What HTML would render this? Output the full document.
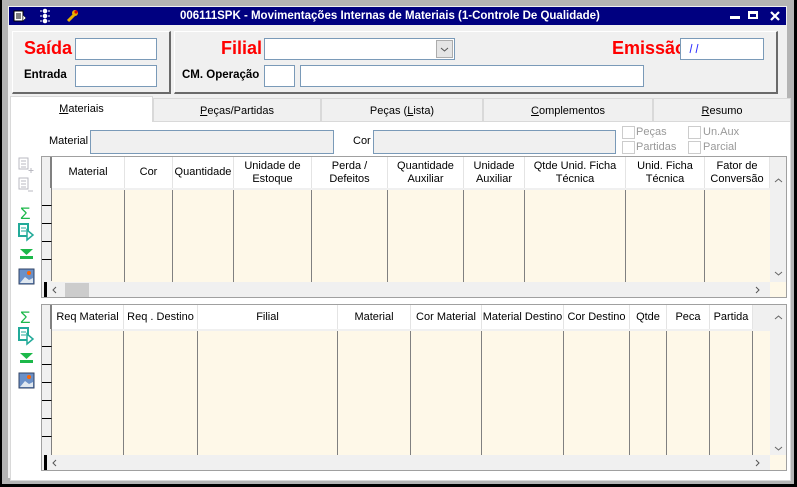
<!DOCTYPE html>
<html><head><meta charset="utf-8"><style>
*{margin:0;padding:0;box-sizing:border-box}
body{width:797px;height:487px;overflow:hidden;background:#a8a8a8;font-family:"Liberation Sans",sans-serif;font-size:11px;color:#000;position:relative}
.a{position:absolute}
.title{left:9px;top:7px;width:777px;height:18px;background:#000080;color:#fff;font-weight:bold;font-size:11.5px}
.panel{background:#f0f0f0;border-top:1px solid #fff;border-left:1px solid #fff;border-right:2px solid #6a6a6a;border-bottom:2px solid #6a6a6a}
.inp{background:#fff;border:1px solid #7a9ab8}
.red{color:#f00;font-weight:bold;font-size:18px;font-family:"Liberation Sans",sans-serif}
.lbl{font-weight:bold;font-size:11.5px}
.tab{top:98px;height:23px;background:#f0f0f0;border:1px solid #d9d9d9;border-bottom:none;text-align:center;line-height:24px;font-size:11px}
.grid{border:1px solid #a0a0a0;background:#f0f0f0;overflow:hidden}
.hd{background:#fff;text-align:center;font-size:11px;display:flex;align-items:center;justify-content:center;line-height:13px;border-right:1px solid #e4e4e4;white-space:nowrap;overflow:hidden}
.col{background:#fef8e8;border-right:1px solid #808080}
.ri{background:#f0f0f0;border-right:1px solid #808080;border-bottom:1px solid #000}
.cb{width:13px;height:13px;border:1px solid #ccc;background:#fff}
.gl{color:#999;font-size:11px}
</style></head><body>
<div class="a" style="left:0;top:0;width:797px;height:487px;background:#000"></div>
<div class="a" style="left:2px;top:0;width:792px;height:484px;background:#b4b4b4"></div>
<div class="a" style="left:8px;top:6px;width:779px;height:472px;background:#f0f0f0"></div>
<div class="a title">
 <svg class="a" style="left:4px;top:3px" width="14" height="12"><rect x="1" y="1" width="9" height="10" fill="#fff" stroke="#000"/><path d="M3 4h5M3 6h5M3 8h5" stroke="#000"/><path d="M10 5l3 3-3 3z" fill="#fff" stroke="#000" stroke-width=".5"/></svg>
 <svg class="a" style="left:30px;top:1px" width="12" height="16"><circle cx="6" cy="3" r="2.3" fill="#fff"/><circle cx="6" cy="8" r="2.3" fill="#fff"/><circle cx="6" cy="13" r="2.3" fill="#fff"/><path d="M1 3h2M9 3h2M1 8h2M9 8h2M1 13h2M9 13h2" stroke="#fff"/></svg>
 <svg class="a" style="left:57px;top:2px" width="14" height="14"><path d="M2 12l6-6" stroke="#e8b000" stroke-width="3"/><circle cx="9" cy="4" r="3" fill="#e8b000"/><circle cx="10" cy="3" r="1.6" fill="#d00"/></svg>
 <div class="a" style="left:171px;top:0;line-height:18px;white-space:nowrap">006111SPK - Movimentações Internas de Materiais (1-Controle De Qualidade)</div>
 <div class="a" style="left:721px;top:9px;width:10px;height:3px;background:#fff"></div>
 <div class="a" style="left:739px;top:4px;width:10px;height:8px;border:2px solid #fff;border-top-width:3px"></div>
 <svg class="a" style="left:761px;top:4px" width="10" height="10"><path d="M1 1l8 8M9 1l-8 8" stroke="#fff" stroke-width="2.2"/></svg>
</div>
<div class="a panel" style="left:12px;top:31px;width:159px;height:63px"></div>
<div class="a panel" style="left:174px;top:31px;width:604px;height:63px"></div>
<div class="a red" style="left:24px;top:38px">Saída</div>
<div class="a inp" style="left:75px;top:38px;width:82px;height:22px"></div>
<div class="a lbl" style="left:24px;top:69px">Entrada</div>
<div class="a inp" style="left:75px;top:65px;width:82px;height:22px"></div>
<div class="a red" style="left:221px;top:38px">Filial</div>
<div class="a inp" style="left:264px;top:38px;width:191px;height:22px"></div>
<div class="a" style="left:436px;top:40px;width:17px;height:18px;background:#e5e5e5;border:1px solid #acacac"><svg width="15" height="16"><path d="M4 7l3.5 3 3.5-3" fill="none" stroke="#555"/></svg></div>
<div class="a red" style="left:612px;top:38px">Emissão</div>
<div class="a inp" style="left:680px;top:38px;width:84px;height:22px"><svg class="a" style="left:7px;top:4px" width="20" height="12"><path d="M4 1l-2 9M10 1l-2 9" stroke="#33f"/></svg></div>
<div class="a lbl" style="left:182px;top:69px">CM. Operação</div>
<div class="a inp" style="left:264px;top:65px;width:31px;height:22px"></div>
<div class="a inp" style="left:300px;top:65px;width:344px;height:22px"></div>
<div class="a" style="left:10px;top:121px;width:781px;height:360px;background:#fff;border:1px solid #d9d9d9"></div>
<div class="a tab" style="left:10px;top:96px;width:143px;height:26px;background:#fff;line-height:24px"><u>M</u>ateriais</div>
<div class="a tab" style="left:153px;width:168px"><u>P</u>eças/Partidas</div>
<div class="a tab" style="left:321px;width:162px">Peças (<u>L</u>ista)</div>
<div class="a tab" style="left:483px;width:170px"><u>C</u>omplementos</div>
<div class="a tab" style="left:653px;width:138px"><u>R</u>esumo</div>
<div class="a" style="left:49px;top:135px">Material</div>
<div class="a" style="left:90px;top:130px;width:244px;height:24px;background:#f0f0f0;border:1px solid #7a9ab8"></div>
<div class="a" style="left:353px;top:135px">Cor</div>
<div class="a" style="left:373px;top:130px;width:243px;height:24px;background:#f0f0f0;border:1px solid #7a9ab8"></div>
<div class="a cb" style="left:622px;top:126px"></div><div class="a gl" style="left:636px;top:126px">Peças</div>
<div class="a cb" style="left:622px;top:141px"></div><div class="a gl" style="left:636px;top:141px">Partidas</div>
<div class="a cb" style="left:688px;top:126px"></div><div class="a gl" style="left:703px;top:126px">Un.Aux</div>
<div class="a cb" style="left:688px;top:141px"></div><div class="a gl" style="left:703px;top:141px">Parcial</div>
<svg class="a" style="left:17px;top:156px" width="22" height="140">
 <g opacity=".45"><rect x="2" y="2" width="9" height="11" fill="#fff" stroke="#667"/><path d="M4 5h5M4 8h5M4 11h5" stroke="#667"/><path d="M14 12v5M11.5 14.5h5" stroke="#667"/>
 <rect x="2" y="22" width="9" height="11" fill="#fff" stroke="#667"/><path d="M4 25h5M4 28h5M4 31h5M11 35h5" stroke="#667"/></g>
 <text x="3" y="63" fill="#1cb84a" font-size="17" font-family="Liberation Sans">Σ</text>
 <rect x="2" y="68" width="9" height="12" fill="#fff" stroke="#2a9" stroke-width="2"/><path d="M4 72h5M4 75h5" stroke="#2a9"/><path d="M10 74l6 5-6 5z" fill="#fff" stroke="#2a9" stroke-width="1.5"/>
 <path d="M3 93h13l-6.5 6z" fill="#1cb84a"/><rect x="3" y="100" width="13" height="3" fill="#1cb84a"/>
 <rect x="2" y="113" width="15" height="15" fill="#6a90c8" stroke="#346"/><path d="M3 127l5-6 4 3 4-2v5z" fill="#e0e8f0"/><circle cx="12" cy="117" r="2" fill="#f60"/>
</svg>
<svg class="a" style="left:17px;top:306px" width="22" height="85">
 <text x="3" y="17" fill="#1cb84a" font-size="17" font-family="Liberation Sans">Σ</text>
 <rect x="2" y="22" width="9" height="12" fill="#fff" stroke="#2a9" stroke-width="2"/><path d="M4 26h5M4 29h5" stroke="#2a9"/><path d="M10 28l6 5-6 5z" fill="#fff" stroke="#2a9" stroke-width="1.5"/>
 <path d="M3 47h13l-6.5 6z" fill="#1cb84a"/><rect x="3" y="54" width="13" height="3" fill="#1cb84a"/>
 <rect x="2" y="67" width="15" height="15" fill="#6a90c8" stroke="#346"/><path d="M3 81l5-6 4 3 4-2v5z" fill="#e0e8f0"/><circle cx="12" cy="71" r="2" fill="#f60"/>
</svg>
<div class="a grid" style="left:41px;top:156px;width:746px;height:142px">
 <div class="a" style="left:0;top:0;width:10px;height:31px;background:#f0f0f0;border-right:2px solid #808080"></div>
 <div class="a" style="left:10px;top:0;width:718px;height:31px;background:#fff;border-bottom:2px solid #000"></div>
 <div class="a ri" style="left:0;top:31px;width:10px;height:18px"></div><div class="a ri" style="left:0;top:49px;width:10px;height:18px"></div><div class="a ri" style="left:0;top:67px;width:10px;height:18px"></div><div class="a ri" style="left:0;top:85px;width:10px;height:18px"></div><div class="a ri" style="left:0;top:103px;width:10px;height:21px;border-bottom:none"></div>
 <div class="a" style="left:10px;top:0;width:718px;height:31px;display:flex">
  <div class="hd" style="width:73px">Material</div><div class="hd" style="width:48px">Cor</div><div class="hd" style="width:61px">Quantidade</div><div class="hd" style="width:78px">Unidade de<br>Estoque</div><div class="hd" style="width:76px">Perda /<br>Defeitos</div><div class="hd" style="width:76px">Quantidade<br>Auxiliar</div><div class="hd" style="width:61px">Unidade<br>Auxiliar</div><div class="hd" style="width:101px">Qtde Unid. Ficha<br>Técnica</div><div class="hd" style="width:79px">Unid. Ficha<br>Técnica</div><div class="hd" style="width:65px">Fator de<br>Conversão</div>
 </div>
 <div class="a" style="left:10px;top:33px;height:92px;width:718px;display:flex">
  <div class="col" style="width:73px"></div><div class="col" style="width:48px"></div><div class="col" style="width:61px"></div><div class="col" style="width:78px"></div><div class="col" style="width:76px"></div><div class="col" style="width:76px"></div><div class="col" style="width:61px"></div><div class="col" style="width:101px"></div><div class="col" style="width:79px"></div><div class="col" style="width:65px;border-right:none"></div>
 </div>
 <div class="a" style="left:728px;top:0;width:17px;height:125px;background:#f0f0f0"><svg width="17" height="125"><path d="M5 25l3.5-3 3.5 3" fill="none" stroke="#666"/><path d="M5 115l3.5 3 3.5-3" fill="none" stroke="#666"/></svg></div>
 <div class="a" style="left:0;top:125px;width:728px;height:16px;background:#f0f0f0"><div class="a" style="left:2px;top:0;width:3px;height:16px;background:#000"></div><svg class="a" style="left:8px;top:0" width="10" height="16"><path d="M6 5l-3 3 3 3" fill="none" stroke="#555"/></svg><div class="a" style="left:23px;top:1px;width:24px;height:14px;background:#ccc"></div><svg class="a" style="left:710px;top:0" width="10" height="16"><path d="M4 5l3 3-3 3" fill="none" stroke="#555"/></svg></div>
 <div class="a" style="left:728px;top:125px;width:17px;height:16px;background:#fef8e8"></div>
</div>
<div class="a grid" style="left:41px;top:304px;width:746px;height:167px">
 <div class="a" style="left:0;top:0;width:10px;height:24px;background:#f0f0f0;border-right:2px solid #808080"></div>
 <div class="a" style="left:10px;top:0;width:701px;height:24px;background:#fff;border-bottom:2px solid #000"></div>
 <div class="a ri" style="left:0;top:24px;width:10px;height:18px"></div><div class="a ri" style="left:0;top:42px;width:10px;height:18px"></div><div class="a ri" style="left:0;top:60px;width:10px;height:18px"></div><div class="a ri" style="left:0;top:78px;width:10px;height:18px"></div><div class="a ri" style="left:0;top:96px;width:10px;height:18px"></div><div class="a ri" style="left:0;top:114px;width:10px;height:18px"></div><div class="a ri" style="left:0;top:132px;width:10px;height:18px;border-bottom:none"></div>
 <div class="a" style="left:10px;top:0;width:718px;height:24px;display:flex">
  <div class="hd" style="width:72px">Req Material</div><div class="hd" style="width:74px">Req . Destino</div><div class="hd" style="width:140px">Filial</div><div class="hd" style="width:73px">Material</div><div class="hd" style="width:71px">Cor Material</div><div class="hd" style="width:82px">Material Destino</div><div class="hd" style="width:66px">Cor Destino</div><div class="hd" style="width:37px">Qtde</div><div class="hd" style="width:43px">Peca</div><div class="hd" style="width:43px">Partida</div>
 </div>
 <div class="a" style="left:10px;top:26px;height:124px;width:718px;display:flex;background:#fef8e8">
  <div class="col" style="width:72px"></div><div class="col" style="width:74px"></div><div class="col" style="width:140px"></div><div class="col" style="width:73px"></div><div class="col" style="width:71px"></div><div class="col" style="width:82px"></div><div class="col" style="width:66px"></div><div class="col" style="width:37px"></div><div class="col" style="width:43px"></div><div class="col" style="width:43px"></div>
 </div>
 <div class="a" style="left:728px;top:0;width:17px;height:150px;background:#f0f0f0"><svg width="17" height="150"><path d="M5 14l3.5-3 3.5 3" fill="none" stroke="#666"/><path d="M5 142l3.5 3 3.5-3" fill="none" stroke="#666"/></svg></div>
 <div class="a" style="left:0;top:150px;width:728px;height:16px;background:#f0f0f0"><div class="a" style="left:2px;top:0;width:3px;height:16px;background:#000"></div><svg class="a" style="left:8px;top:0" width="10" height="16"><path d="M6 5l-3 3 3 3" fill="none" stroke="#555"/></svg><svg class="a" style="left:710px;top:0" width="10" height="16"><path d="M4 5l3 3-3 3" fill="none" stroke="#555"/></svg></div>
 <div class="a" style="left:728px;top:150px;width:17px;height:16px;background:#fef8e8"></div>
</div>
</body></html>
